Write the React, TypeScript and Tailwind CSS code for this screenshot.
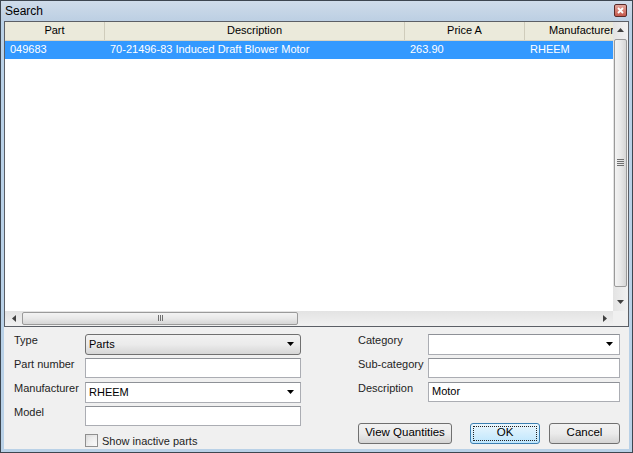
import React from "react";

type Dir = "up" | "down" | "left" | "right";

function Tri({ dir, size = 7, className = "" }: { dir: Dir; size?: number; className?: string }) {
  const h = Math.ceil(size / 2);
  const horiz = dir === "left" || dir === "right";
  const w = horiz ? h : size;
  const ht = horiz ? size : h;
  const pts = {
    up: `0,${h} ${size / 2},0 ${size},${h}`,
    down: `0,0 ${size},0 ${size / 2},${h}`,
    left: `${h},0 ${h},${size} 0,${size / 2}`,
    right: `0,0 0,${size} ${h},${size / 2}`,
  }[dir];
  return (
    <svg width={w} height={ht} viewBox={`0 0 ${w} ${ht}`} className={className}>
      <polygon points={pts} fill="currentColor" />
    </svg>
  );
}

const columns = [
  { label: "Part", value: "049683", width: "w-[100px]" },
  { label: "Description", value: "70-21496-83 Induced Draft Blower Motor", width: "w-[300px]" },
  { label: "Price A", value: "263.90", width: "w-[120px]" },
  { label: "Manufacturer", value: "RHEEM", width: "w-[114px]" },
];

function Field({ label, children, labelW = "w-[71px]" }: { label: string; children?: React.ReactNode; labelW?: string }) {
  return (
    <div className="flex h-[24px]">
      <span className={`${labelW} shrink-0 leading-[13px] text-[#1e1e1e]`}>{label}</span>
      {children}
    </div>
  );
}

function TextBox({ value = "", width }: { value?: string; width: string }) {
  return (
    <div className={`${width} h-[20px] flex items-center px-[3px] bg-white border border-[#abadb3] border-t-[#8e9197]`}>
      {value}
    </div>
  );
}

function Combo({ value = "", width }: { value?: string; width: string }) {
  return (
    <div className={`${width} h-[21px] flex items-center justify-between pl-[3px] pr-[6px] bg-white border border-[#abadb3] border-t-[#8e9197]`}>
      <span>{value}</span>
      <Tri dir="down" size={7} className="text-black" />
    </div>
  );
}

function Button({ label, width, focused = false }: { label: string; width: string; focused?: boolean }) {
  return (
    <button
      type="button"
      className={`${width} h-[21px] rounded-[3px] border p-[2px] text-[11.5px] ${
        focused
          ? "border-[#3c7fb1] bg-gradient-to-b from-[#eaf6fd] to-[#bee6fd]"
          : "border-[#707070] bg-gradient-to-b from-[#f2f2f2] via-[#ebebeb] to-[#d4d4d4]"
      }`}
    >
      <div className={`h-full flex items-center justify-center ${focused ? "border border-dotted border-[#222]" : ""}`}>
        {label}
      </div>
    </button>
  );
}

export default function App() {
  return (
    <div className="w-[633px] h-[453px] bg-[#3d4650] p-px font-['Liberation_Sans',Arial,sans-serif] text-[11px] text-black">
      <div className="h-full flex flex-col bg-[#b9d1e7] px-[3px] pb-[3px]">
        {/* title bar */}
        <div className="h-[20px] flex items-center justify-between bg-gradient-to-b from-[#cfdcea] to-[#bccfe3] -mx-[3px] px-[4px]">
          <span className="text-[12px] text-black">Search</span>
          <div className="w-[13px] h-[13px] mr-[1px] rounded-[2px] border border-[#5a2a28] bg-gradient-to-b from-[#e2a69d] to-[#c4574b] flex items-center justify-center">
            <svg width="7" height="7" viewBox="0 0 7 7">
              <path d="M1 1 L6 6 M6 1 L1 6" stroke="white" strokeWidth="1.8" />
            </svg>
          </div>
        </div>

        <div className="flex-1 flex flex-col bg-[#f0f0f0]">
          {/* list view */}
          <div className="h-[306px] flex flex-col border border-[#5b5f66] bg-white">
            <div className="flex-1 flex min-h-0">
              <div className="flex-1 overflow-hidden flex flex-col">
                <div className="flex h-[19px] bg-[#ebeadb] border-b border-[#d6d3c4]">
                  {columns.map((c) => (
                    <div
                      key={c.label}
                      className={`${c.width} shrink-0 flex items-center justify-center border-r border-[#cfccbb] whitespace-nowrap`}
                    >
                      {c.label}
                    </div>
                  ))}
                </div>
                <div className="flex h-[18px] bg-[#3399ff] text-white">
                  {columns.map((c) => (
                    <div key={c.label} className={`${c.width} shrink-0 flex items-center px-[5px] whitespace-nowrap`}>
                      {c.value}
                    </div>
                  ))}
                </div>
              </div>
              {/* vertical scrollbar */}
              <div className="w-[15px] flex flex-col bg-gradient-to-r from-[#e3e3e3] to-[#f1f1f1]">
                <div className="h-[17px] flex items-center justify-center text-[#404040]">
                  <Tri dir="up" size={7} />
                </div>
                <div className="flex-1 flex flex-col px-px">
                  <div className="h-[248px] rounded-[2px] border border-[#9a9a9a] bg-gradient-to-r from-[#f3f3f3] via-[#e8e8e8] to-[#d6d6d6] flex flex-col items-center justify-center gap-px">
                    <div className="w-[7px] h-px bg-[#6f6f6f]" />
                    <div className="w-[7px] h-px bg-[#6f6f6f]" />
                    <div className="w-[7px] h-px bg-[#6f6f6f]" />
                    <div className="w-[7px] h-px bg-[#6f6f6f]" />
                  </div>
                </div>
                <div className="h-[17px] flex items-center justify-center text-[#404040]">
                  <Tri dir="down" size={7} />
                </div>
              </div>
            </div>
            {/* horizontal scrollbar */}
            <div className="h-[15px] flex">
              <div className="flex-1 flex items-center bg-gradient-to-b from-[#e3e3e3] to-[#f1f1f1]">
                <div className="w-[17px] flex justify-center text-[#404040]">
                  <Tri dir="left" size={7} />
                </div>
                <div className="w-[276px] h-[13px] rounded-[2px] border border-[#9a9a9a] bg-gradient-to-b from-[#f3f3f3] via-[#e8e8e8] to-[#d6d6d6] flex items-center justify-center gap-px">
                  <div className="h-[6px] w-px bg-[#6f6f6f]" />
                  <div className="h-[6px] w-px bg-[#6f6f6f]" />
                  <div className="h-[6px] w-px bg-[#6f6f6f]" />
                </div>
                <div className="flex-1" />
                <div className="w-[17px] flex justify-center text-[#404040]">
                  <Tri dir="right" size={7} />
                </div>
              </div>
              <div className="w-[15px] bg-[#f0f0f0]" />
            </div>
          </div>

          {/* form */}
          <div className="flex pl-[10px] pt-[7px]">
            <div className="flex flex-col w-[287px]">
              <Field label="Type">
                <div className="w-[216px] h-[21px] flex items-center justify-between pl-[3px] pr-[6px] rounded-[3px] border border-[#707070] bg-gradient-to-b from-[#f2f2f2] via-[#ebebeb] to-[#d6d6d6]">
                  <span>Parts</span>
                  <Tri dir="down" size={7} />
                </div>
              </Field>
              <Field label="Part number">
                <TextBox width="w-[216px]" />
              </Field>
              <Field label="Manufacturer">
                <Combo width="w-[216px]" value="RHEEM" />
              </Field>
              <Field label="Model">
                <TextBox width="w-[216px]" />
              </Field>
              <div className="flex items-center gap-[4px] pl-[71px] pt-[3px]">
                <div className="w-[13px] h-[13px] border border-[#8f8f8f] bg-gradient-to-br from-[#dcdcdc] to-[#fbfbfb] p-[2px]">
                  <div className="w-full h-full bg-gradient-to-br from-[#e6e6e6] to-[#f8f8f8]" />
                </div>
                <span className="text-[#1e1e1e]">Show inactive parts</span>
              </div>
            </div>

            <div className="ml-[57px] flex flex-col">
              <Field label="Category" labelW="w-[70px]">
                <Combo width="w-[192px]" />
              </Field>
              <Field label="Sub-category" labelW="w-[70px]">
                <TextBox width="w-[192px]" />
              </Field>
              <Field label="Description" labelW="w-[70px]">
                <TextBox width="w-[192px]" value="Motor" />
              </Field>
              <div className="flex mt-[17px]">
                <Button label="View Quantities" width="w-[94px]" />
                <div className="ml-[18px]">
                  <Button label="OK" width="w-[70px]" focused />
                </div>
                <div className="ml-[9px]">
                  <Button label="Cancel" width="w-[71px]" />
                </div>
              </div>
            </div>
          </div>
        </div>
      </div>
    </div>
  );
}
